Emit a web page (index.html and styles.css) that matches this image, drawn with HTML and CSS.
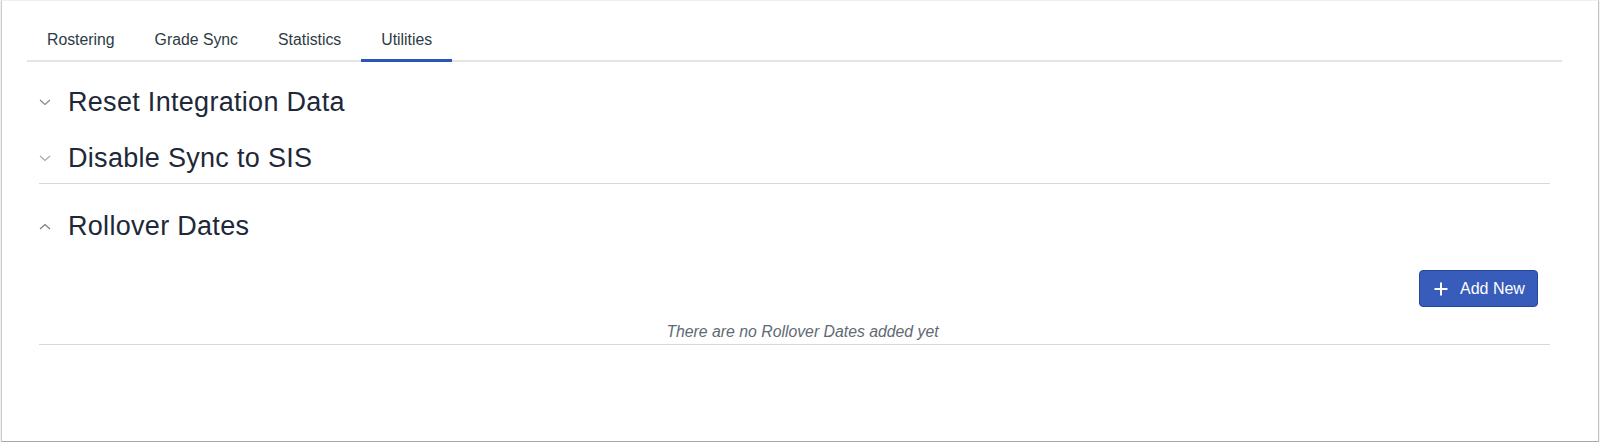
FILE: index.html
```html
<!DOCTYPE html>
<html lang="en">
<head>
<meta charset="utf-8">
<title>Utilities</title>
<link rel="stylesheet" href="styles.css">
</head>
<body>
<div class="window">
  <nav class="tabs">
    <div class="tab">Rostering</div>
    <div class="tab">Grade Sync</div>
    <div class="tab">Statistics</div>
    <div class="tab tab-active">Utilities</div>
  </nav>
  <div class="content">
    <section class="acc acc-first">
      <div class="acc-head">
        <svg class="chev" width="12" height="7" viewBox="0 0 12 7"><path d="M1 1 L6 5.5 L11 1" fill="none" stroke="#7c8792" stroke-width="1.1"/></svg>
        <h2 class="acc-title">Reset Integration Data</h2>
      </div>
    </section>
    <section class="acc acc-second">
      <div class="acc-head">
        <svg class="chev" width="12" height="7" viewBox="0 0 12 7"><path d="M1 1 L6 5.5 L11 1" fill="none" stroke="#a0a8b0" stroke-width="1.1"/></svg>
        <h2 class="acc-title">Disable Sync to SIS</h2>
      </div>
    </section>
    <section class="acc acc-open">
      <div class="acc-head">
        <svg class="chev" width="12" height="7" viewBox="0 0 12 7"><path d="M1 6 L6 1.5 L11 6" fill="none" stroke="#6f7b86" stroke-width="1.1"/></svg>
        <h2 class="acc-title">Rollover Dates</h2>
      </div>
      <div class="acc-body">
        <div class="actions">
          <button class="btn-add">
            <svg width="14" height="14" viewBox="0 0 14 14"><path d="M7 0.5 V13.5 M0.5 7 H13.5" stroke="#fff" stroke-width="2"/></svg>
            <span>Add New</span>
          </button>
        </div>
        <p class="empty">There are no Rollover Dates added yet</p>
      </div>
    </section>
  </div>
</div>
</body>
</html>
```
FILE: styles.css
```css
* { box-sizing: border-box; }
html, body {
  margin: 0;
  padding: 0;
  background: #ffffff;
  font-family: "Liberation Sans", Arial, sans-serif;
}
.window {
  margin-left: 1px;
  width: 1598px;
  height: 442px;
  border-top: 1px solid #efefef;
  border-left: 1px solid #c9c9c9;
  border-right: 1px solid #c2c2c2;
  border-bottom: 1px solid #a9a9a9;
  box-shadow: 0 1px 2px rgba(0,0,0,0.18);
  background: #fff;
}
.tabs {
  display: flex;
  margin: 13px 36px 0 25px;
  border-bottom: 2px solid #e3e4e8;
}
.tab {
  position: relative;
  padding: 16px 20px 10px;
  font-size: 15.8px;
  line-height: 20px;
  color: #2d3b45;
}
.tab-active::after {
  content: "";
  position: absolute;
  left: 0;
  right: 0;
  bottom: -2px;
  height: 3px;
  background: #2a56b9;
}
.content {
  margin: 0 48px 0 37px;
}
.acc-head {
  display: flex;
  align-items: center;
  gap: 17px;
}
.chev {
  display: block;
  flex: none;
}
.acc-title {
  margin: 0;
  font-size: 27px;
  font-weight: 400;
  line-height: 34px;
  color: #1e2838;
  letter-spacing: 0.3px;
}
.acc-first {
  padding-top: 23px;
}
.acc-second {
  padding-top: 22px;
  padding-bottom: 8px;
  border-bottom: 1px solid #d6d8dc;
}
.acc-open {
  padding-top: 25px;
  border-bottom: 1px solid #d6d8dc;
}
.acc-body {
  padding-top: 27px;
}
.actions {
  display: flex;
  justify-content: flex-end;
  padding-right: 12px;
}
.btn-add {
  display: flex;
  align-items: center;
  gap: 12px;
  height: 37px;
  width: 119px;
  padding: 0 0 0 14px;
  background: #375cb9;
  border: 1px solid #27489a;
  border-radius: 4px;
  color: #fff;
  font-family: "Liberation Sans", Arial, sans-serif;
  font-size: 16px;
  line-height: 20px;
}
.empty {
  margin: 15px 0 2px;
  padding-left: 16px;
  text-align: center;
  font-style: italic;
  font-size: 15.8px;
  line-height: 20px;
  color: #5f6975;
}
```
